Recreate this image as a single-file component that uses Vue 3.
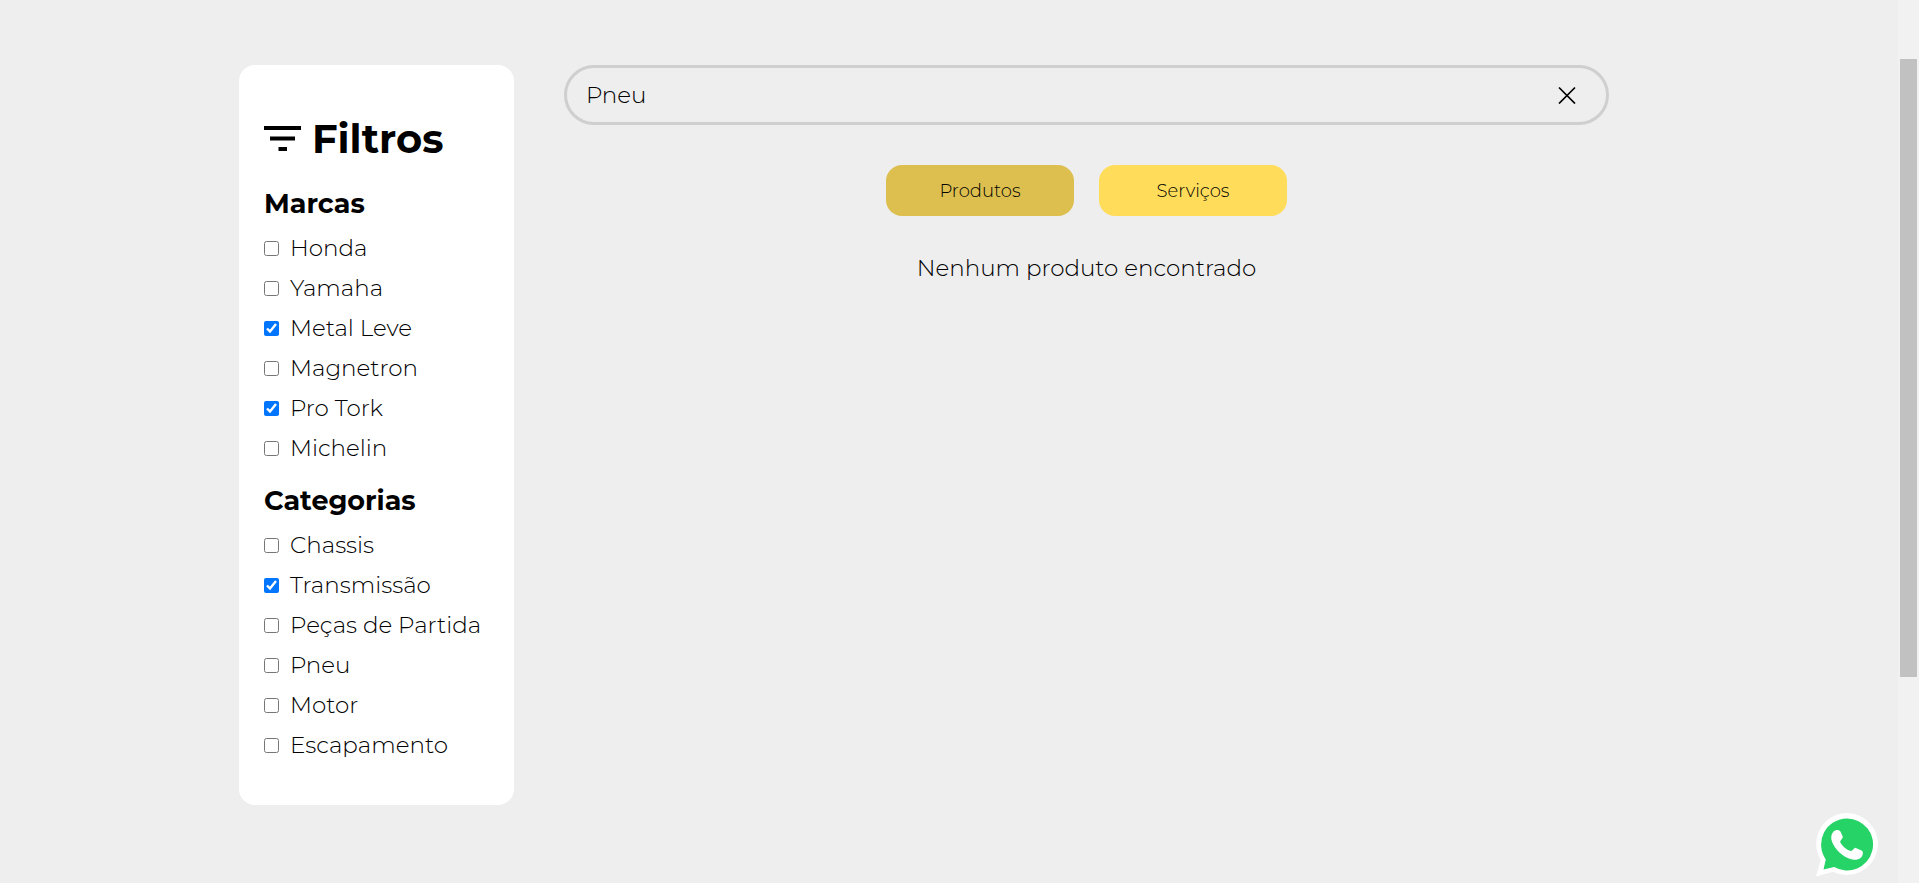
<script setup>
import { ref } from 'vue'

const search = ref('Pneu')
const tab = ref('produtos')

const groups = ref([
  {
    title: 'Marcas',
    options: [
      { id: 'honda', label: 'Honda', checked: false },
      { id: 'yamaha', label: 'Yamaha', checked: false },
      { id: 'metal-leve', label: 'Metal Leve', checked: true },
      { id: 'magnetron', label: 'Magnetron', checked: false },
      { id: 'pro-tork', label: 'Pro Tork', checked: true },
      { id: 'michelin', label: 'Michelin', checked: false },
    ],
  },
  {
    title: 'Categorias',
    options: [
      { id: 'chassis', label: 'Chassis', checked: false },
      { id: 'transmissao', label: 'Transmissão', checked: true },
      { id: 'pecas-de-partida', label: 'Peças de Partida', checked: false },
      { id: 'pneu', label: 'Pneu', checked: false },
      { id: 'motor', label: 'Motor', checked: false },
      { id: 'escapamento', label: 'Escapamento', checked: false },
    ],
  },
])
</script>

<template>
  <div class="page">
    <div class="container">
      <aside class="filters">
        <h1 class="filters-title">
          <svg class="filter-icon" viewBox="0 0 37 26" aria-hidden="true">
            <path d="M0 0h37v4H0zM6 10.500h25v4H6zM14.500 21h8.500v4h-8.500z" />
          </svg>
          Filtros
        </h1>
        <section v-for="group in groups" :key="group.title" class="group">
          <h2 class="group-title">{{ group.title }}</h2>
          <ul class="options">
            <li v-for="option in group.options" :key="option.id" class="option">
              <input :id="option.id" v-model="option.checked" type="checkbox" class="box" />
              <label :for="option.id">{{ option.label }}</label>
            </li>
          </ul>
        </section>
      </aside>

      <main class="results">
        <div class="search">
          <input v-model="search" type="text" class="search-input" aria-label="Pesquisar" />
          <button type="button" class="clear" aria-label="Limpar" @click="search = ''">
            <svg viewBox="0 0 18 18" aria-hidden="true"><path d="M1 1.500l16 16M17 1.500L1 17.500" /></svg>
          </button>
        </div>
        <div class="tabs">
          <button type="button" class="tab" :class="{ active: tab === 'produtos' }" @click="tab = 'produtos'">Produtos</button>
          <button type="button" class="tab" :class="{ active: tab === 'servicos' }" @click="tab = 'servicos'">Serviços</button>
        </div>
        <p class="empty">Nenhum produto encontrado</p>
      </main>
    </div>

    <a href="#" class="whatsapp" aria-label="WhatsApp">
      <svg viewBox="0 0 62 64" aria-hidden="true">
        <path fill="#fff" d="M31 0a31 31 0 1 1-14 58.700L0 63.500L4.700 47A31 31 0 0 1 31 0z" />
        <path fill="#25d366" d="M31 5.500a26 26 0 1 1-12.800 48.600L7.500 56.500L9.800 46.400A26 26 0 0 1 31 5.500z" />
        <path fill="#fff" d="M17.500 18.500c1.600-2 5.800-2.300 7 0l2.200 5c.7 1.600-2.700 3.900-2.500 5.400 1.500 3.600 6.400 8.100 10.700 9.100 1.700.2 3.200-3.500 4.900-3.100l5.800 2.500c2.300 1.200 1.200 5.700-.8 7.300-2.800 2.400-6.800 2.700-10.700 1.300-7.900-2.700-15.200-9.700-18.100-17.200-1.300-3.700-1.100-7.500 1.500-10.300z" />
      </svg>
    </a>

    <div class="scrollbar" aria-hidden="true"><div class="thumb"></div></div>
  </div>
</template>

<style>
body {
  margin: 0;
  background: #eee;
}
</style>

<style scoped>
.page {
  box-sizing: border-box;
  min-height: 100vh;
  padding: 65px 21px 40px 0;
  background: #eee;
  color: #000;
  font-family: Montserrat, Inter, "Open Sans", sans-serif;
  font-size: 23px;
  font-weight: 300;
}

.container {
  display: flex;
  align-items: flex-start;
  max-width: 1420px;
  margin: 0 auto;
}

.filters {
  box-sizing: border-box;
  flex: 0 0 275px;
  padding: 40px 25px 38px;
  border-radius: 16px;
  background: #fff;
}

.filters-title {
  display: flex;
  align-items: center;
  gap: 11px;
  margin: 0;
  font-size: 40px;
  font-weight: 700;
  line-height: 68px;
}

.filter-icon {
  width: 37px;
  height: 26px;
}

.group {
  padding-top: 7px;
}

.group-title {
  margin: 0;
  font-size: 27px;
  font-weight: 700;
  line-height: 48px;
}

.options {
  margin: 0;
  padding: 0 0 2px;
  list-style: none;
}

.option {
  display: flex;
  align-items: center;
  gap: 11px;
  height: 40px;
  white-space: nowrap;
}

.box {
  flex: none;
  width: 15px;
  height: 15px;
  margin: 0;
}

.results {
  flex: 1;
  min-width: 0;
  padding: 0 50px;
}

.search {
  display: flex;
  align-items: center;
  box-sizing: border-box;
  height: 60px;
  padding: 0 28px 0 19px;
  border: 3px solid #cfcfcf;
  border-radius: 30px;
}

.search-input {
  flex: 1;
  min-width: 0;
  padding: 0;
  border: 0;
  outline: 0;
  background: none;
  color: inherit;
  font: inherit;
}

.clear {
  display: flex;
  padding: 2px;
  border: 0;
  background: none;
  cursor: pointer;
}

.clear svg {
  width: 18px;
  height: 18px;
  fill: none;
  stroke: #000;
  stroke-width: 1.7;
}

.tabs {
  display: flex;
  justify-content: center;
  gap: 25px;
  margin-top: 40px;
}

.tab {
  width: 188px;
  height: 51px;
  padding: 0;
  border: 0;
  border-radius: 16px;
  background: #ffdd5b;
  color: #000;
  font: inherit;
  font-size: 18px;
  cursor: pointer;
}

.tab.active {
  background: #ddbf4f;
}

.empty {
  margin: 32px 0 0;
  line-height: 40px;
  text-align: center;
}

.whatsapp {
  position: fixed;
  right: 41px;
  bottom: 6px;
  width: 62px;
  height: 64px;
}

.whatsapp svg {
  display: block;
  width: 100%;
  height: 100%;
}

.scrollbar {
  position: fixed;
  top: 0;
  right: 0;
  bottom: 0;
  box-sizing: border-box;
  width: 21px;
  padding: 59px 2px 0;
  background: #f1f1f1;
}

.thumb {
  height: 75%;
  background: #c1c1c1;
}
</style>
